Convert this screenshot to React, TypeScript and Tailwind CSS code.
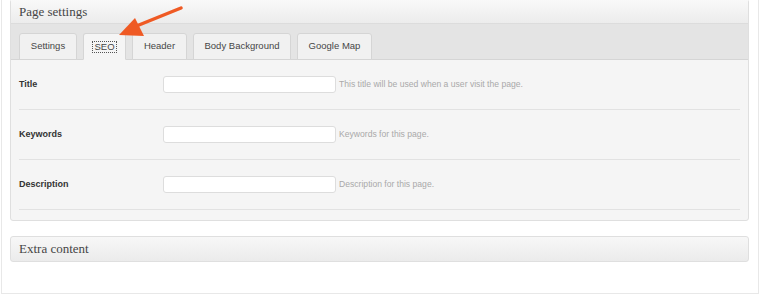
const tabs = [
  { label: 'Settings', w: 'w-[58px]' },
  { label: 'SEO', w: 'w-[43px]', active: true },
  { label: 'Header', w: 'w-[55px]' },
  { label: 'Body Background', w: 'w-[98px]' },
  { label: 'Google Map', w: 'w-[75px]' },
];

const fields = [
  { label: 'Title', hint: 'This title will be used when a user visit the page.' },
  { label: 'Keywords', hint: 'Keywords for this page.' },
  { label: 'Description', hint: 'Description for this page.' },
];

export default function App() {
  return (
    <div className="relative h-[296px] w-[760px] overflow-hidden bg-white font-['Liberation_Sans',Arial,sans-serif]">
      <div className="ml-[1px] h-[295px] w-[758px] border-x border-b border-[#e8e8e8] pl-[8px] pr-[9px]">
        {/* Page settings panel */}
        <div className="-mt-[1px] rounded-[3px] border border-[#dfdfdf] bg-[#f5f5f5] pb-[10px]">
          <div className="flex h-[24px] items-center border-b border-[#dcdcdc] bg-gradient-to-b from-[#f9f9f9] to-[#ececec] px-[8px] pt-[1px] font-['Liberation_Serif',Georgia,serif] text-[13px] text-[#464646]">
            Page settings
          </div>
          <div className="flex h-[36px] items-end gap-[6px] border-b border-[#d5d5d5] bg-[#e4e4e4] pl-[8px]">
            {tabs.map((t) => (
              <div
                key={t.label}
                className={`${t.w} -mb-[1px] flex h-[27px] items-center justify-center rounded-t-[3px] border border-[#d5d5d5] text-[9.5px] text-[#464646] ${
                  t.active ? 'border-b-[#f5f5f5] bg-[#f5f5f5]' : 'bg-[#f1f1f1]'
                }`}
              >
                {t.active ? (
                  <span className="border border-dotted border-[#555] px-[1px] leading-[10px]">{t.label}</span>
                ) : (
                  t.label
                )}
              </div>
            ))}
          </div>
          <div className="px-[8px]">
            {fields.map((f) => (
              <div key={f.label} className="flex h-[50px] items-center border-b border-[#e2e2e2]">
                <div className="w-[144px] text-[9px] font-bold text-[#333]">{f.label}</div>
                <div className="h-[17px] w-[173px] rounded-[3px] border border-[#dddddd] bg-white" />
                <div className="ml-[3px] text-[8.6px] text-[#a9a9a9]">{f.hint}</div>
              </div>
            ))}
          </div>
        </div>

        {/* Extra content panel */}
        <div className="mt-[15px] flex h-[26px] items-center rounded-[3px] border border-[#dfdfdf] bg-gradient-to-b from-[#f7f7f7] to-[#ebebeb] px-[8px] font-['Liberation_Serif',Georgia,serif] text-[13px] text-[#464646]">
          Extra content
        </div>
      </div>

      {/* annotation arrow */}
      <svg className="absolute left-0 top-0" width="760" height="296" viewBox="0 0 760 296">
        <line x1="181" y1="8" x2="134" y2="27" stroke="#ef5a24" strokeWidth="3.5" strokeLinecap="round" />
        <polygon points="119,35 135,18 144,36" fill="#ef5a24" />
      </svg>
    </div>
  );
}
